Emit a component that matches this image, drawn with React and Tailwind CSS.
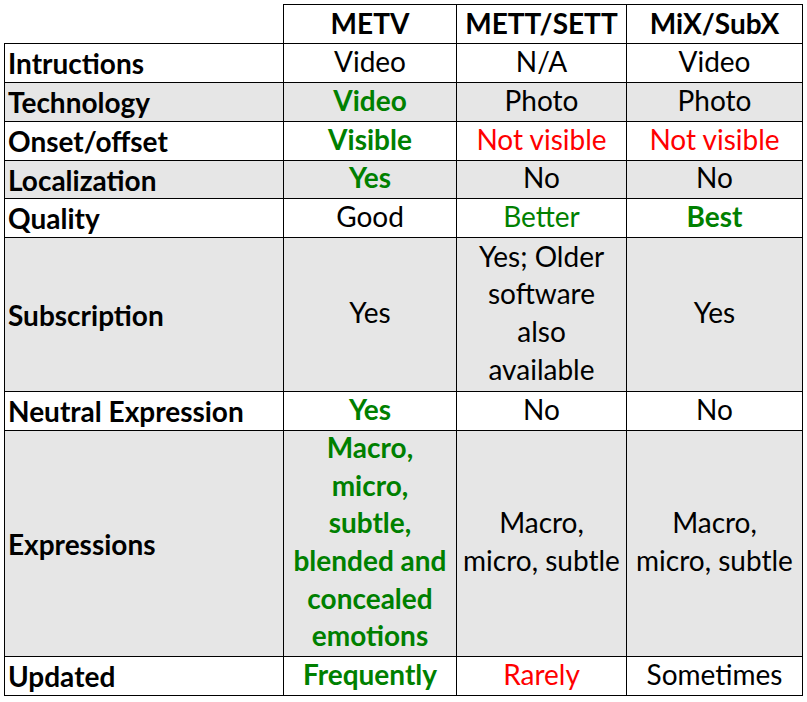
import React from "react";

const G = "text-[#008000]";
const R = "text-[#ff0000]";

const rows = [
  { label: "Intructions", h: "h-[39px]", gray: false, cells: [{ t: "Video" }, { t: "N/A" }, { t: "Video" }] },
  { label: "Technology", h: "h-[39px]", gray: true, cells: [{ t: "Video", c: G, b: true }, { t: "Photo" }, { t: "Photo" }] },
  { label: "Onset/offset", h: "h-[39px]", gray: false, cells: [{ t: "Visible", c: G, b: true }, { t: "Not visible", c: R }, { t: "Not visible", c: R }] },
  { label: "Localization", h: "h-[38px]", gray: true, cells: [{ t: "Yes", c: G, b: true }, { t: "No" }, { t: "No" }] },
  { label: "Quality", h: "h-[39px]", gray: false, cells: [{ t: "Good" }, { t: "Better", c: G }, { t: "Best", c: G, b: true }] },
  { label: "Subscription", h: "h-[154px]", gray: true, cells: [{ t: "Yes" }, { t: ["Yes; Older", "software", "also", "available"] }, { t: "Yes" }] },
  { label: "Neutral Expression", h: "h-[39px]", gray: false, cells: [{ t: "Yes", c: G, b: true }, { t: "No" }, { t: "No" }] },
  { label: "Expressions", h: "h-[226px]", gray: true, cells: [{ t: ["Macro,", "micro,", "subtle,", "blended and", "concealed", "emotions"], c: G, b: true }, { t: ["Macro,", "micro, subtle"] }, { t: ["Macro,", "micro, subtle"] }] },
  { label: "Updated", h: "h-[39px]", gray: false, cells: [{ t: "Frequently", c: G, b: true }, { t: "Rarely", c: R }, { t: "Sometimes" }] },
];

const widths = ["w-[173px]", "w-[170px]", "w-[176px]"];

function Cell({ cell, w, bg }) {
  const lines = Array.isArray(cell.t) ? cell.t : [cell.t];
  return (
    <div className={`${w} ${bg} border-r border-b border-black flex flex-col items-center justify-center text-center pb-[3px] ${cell.c || "text-black"} ${cell.b ? "font-bold" : "font-normal"}`}>
      {lines.map((l, i) => (
        <div key={i} className="leading-[37.7px] whitespace-nowrap">{l}</div>
      ))}
    </div>
  );
}

export default function App() {
  return (
    <div className="w-[807px] h-[702px] bg-white pl-[4px] pt-[4px] text-[28px]" style={{ fontFamily: "Lato, 'Liberation Sans', sans-serif" }}>
      <div className="flex flex-col w-[799px]">
        <div className="flex h-[40px]">
          <div className="w-[280px] border-r border-b border-black" />
          {["METV", "METT/SETT", "MiX/SubX"].map((h, i) => (
            <div key={h} className={`${widths[i]} border-t border-r border-b border-black flex items-center justify-center font-bold text-black pb-[2px]`}>
              {h}
            </div>
          ))}
        </div>
        {rows.map((r) => {
          const bg = r.gray ? "bg-[#e6e6e6]" : "bg-white";
          return (
            <div key={r.label} className={`flex ${r.h}`}>
              <div className={`w-[280px] ${bg} border-l border-r border-b border-black flex items-center pl-[3px] font-bold text-black`}>
                {r.label}
              </div>
              {r.cells.map((c, i) => (
                <Cell key={i} cell={c} w={widths[i]} bg={bg} />
              ))}
            </div>
          );
        })}
      </div>
    </div>
  );
}
